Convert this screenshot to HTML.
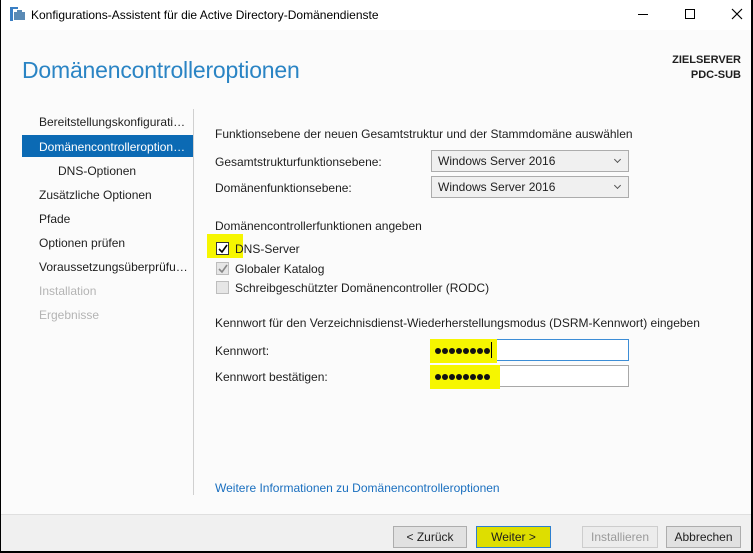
<!DOCTYPE html>
<html><head><meta charset="utf-8"><style>
*{margin:0;padding:0;box-sizing:border-box}
body{width:753px;height:553px;overflow:hidden;font-family:"Liberation Sans",sans-serif;font-size:12px;color:#1e1e1e;background:#000;position:relative}
.win{position:absolute;left:1px;top:0;width:750px;height:551px;background:#fbfbfb}
.t{position:absolute;white-space:nowrap}
.title{position:absolute;left:0;top:0;width:750px;height:30px;background:#fff}
.nav{position:absolute;left:38px;font-size:12px;color:#1e1e1e}
.dis{color:#b4b4b4}
.sel{position:absolute;left:21px;top:135px;width:171px;height:22px;background:#0b6ab4}
.combo{position:absolute;left:430px;width:198px;height:22px;border:1px solid #acacac;background:#f0f0f0;padding:3px 6px;font-size:12px}
.combo:after{content:"";position:absolute;right:8px;top:6px;width:4px;height:4px;border-right:1px solid #555;border-bottom:1px solid #555;transform:rotate(45deg)}
.cb{position:absolute;left:215px;width:13px;height:13px;border:1px solid #bdbdbd;background:#e6e6e6}
.inp{position:absolute;left:430px;width:198px;height:22px;background:#fff;border:1px solid #a8a8a8}
.hl{position:absolute;background:#f6f600}
.btn{position:absolute;top:526px;height:22px;border:1px solid #adadad;background:#e1e1e1;text-align:center;line-height:20px;font-size:12px}
.dots{position:absolute;display:flex;gap:1px}
.dots i{display:block;width:6px;height:6px;border-radius:50%;background:#111}
</style></head><body>
<div class="win">
<div class="title">
<svg class="t" style="left:9px;top:7px" width="16" height="14"><rect x="0" y="0" width="3" height="14" fill="#3a7fc4"/><rect x="3" y="0" width="5" height="2" fill="#3a7fc4"/><rect x="4" y="5" width="11" height="8" fill="#5a8ab5"/><rect x="7" y="3" width="5" height="2" fill="#5a8ab5"/></svg>
<div class="t" style="left:30px;top:8px;font-size:12px;color:#000">Konfigurations-Assistent für die Active Directory-Domänendienste</div>
<div class="t" style="left:637px;top:14px;width:10px;height:1px;background:#000"></div>
<div class="t" style="left:684px;top:9px;width:10px;height:10px;border:1px solid #000"></div>
<svg class="t" style="left:730px;top:8px" width="12" height="12"><path d="M1 1L11 11M11 1L1 11" stroke="#000" stroke-width="1.2"/></svg>
</div>
<div class="t" style="left:21px;top:57px;font-size:23px;color:#2a84c4;letter-spacing:-0.2px">Domänencontrolleroptionen</div>
<div class="t" style="right:10px;top:53px;font-size:11px;font-weight:bold;text-align:right;line-height:15px">ZIELSERVER<br>PDC-SUB</div>
<div class="sel"></div>
<div class="t nav" style="top:115px">Bereitstellungskonfigurati…</div>
<div class="t nav" style="top:140px;color:#fff">Domänencontrolleroption…</div>
<div class="t nav" style="top:164px;left:57px">DNS-Optionen</div>
<div class="t nav" style="top:188px">Zusätzliche Optionen</div>
<div class="t nav" style="top:212px">Pfade</div>
<div class="t nav" style="top:236px">Optionen prüfen</div>
<div class="t nav" style="top:260px">Voraussetzungsüberprüfu…</div>
<div class="t nav dis" style="top:284px">Installation</div>
<div class="t nav dis" style="top:308px">Ergebnisse</div>
<div class="t" style="left:192px;top:109px;width:1px;height:386px;background:#d0d0d0"></div>
<div class="t" style="left:214px;top:127px">Funktionsebene der neuen Gesamtstruktur und der Stammdomäne auswählen</div>
<div class="t" style="left:214px;top:155px">Gesamtstrukturfunktionsebene:</div>
<div class="combo" style="top:150px">Windows Server 2016</div>
<div class="t" style="left:214px;top:181px">Domänenfunktionsebene:</div>
<div class="combo" style="top:176px">Windows Server 2016</div>
<div class="t" style="left:214px;top:219px">Domänencontrollerfunktionen angeben</div>
<div class="hl" style="left:206px;top:234px;width:36px;height:24px"></div>
<div class="cb" style="top:242px;background:#fff;border-color:#333"></div>
<svg class="t" style="left:216px;top:243px" width="12" height="12"><path d="M2 6L5 9L10 2" stroke="#000" stroke-width="1.6" fill="none"/></svg>
<div class="t" style="left:234px;top:242px">DNS-Server</div>
<div class="cb" style="top:262px"></div>
<svg class="t" style="left:216px;top:263px" width="12" height="12"><path d="M2 6L5 9L10 2" stroke="#888" stroke-width="1.6" fill="none"/></svg>
<div class="t" style="left:234px;top:262px">Globaler Katalog</div>
<div class="cb" style="top:281px"></div>
<div class="t" style="left:234px;top:281px">Schreibgeschützter Domänencontroller (RODC)</div>
<div class="t" style="left:214px;top:316px">Kennwort für den Verzeichnisdienst-Wiederherstellungsmodus (DSRM-Kennwort) eingeben</div>
<div class="t" style="left:214px;top:344px">Kennwort:</div>
<div class="inp" style="top:339px;border-color:#3c8dd6"></div>
<div class="hl" style="left:429px;top:339px;width:67px;height:24px"></div>
<div class="dots" style="left:434px;top:348px"><i></i><i></i><i></i><i></i><i></i><i></i><i></i><i></i></div>
<div class="t" style="left:490px;top:342px;width:1px;height:16px;background:#000"></div>
<div class="t" style="left:214px;top:370px">Kennwort bestätigen:</div>
<div class="inp" style="top:365px"></div>
<div class="hl" style="left:429px;top:365px;width:70px;height:24px"></div>
<div class="dots" style="left:434px;top:374px"><i></i><i></i><i></i><i></i><i></i><i></i><i></i><i></i></div>
<div class="t" style="left:214px;top:481px;color:#1a6fbf">Weitere Informationen zu Domänencontrolleroptionen</div>
<div class="t" style="left:0;top:514px;width:750px;height:37px;background:#f0f0f0;border-top:1px solid #dfdfdf"></div>
<div class="btn" style="left:392px;width:74px">&lt; Zurück</div>
<div class="btn" style="left:475px;width:75px;background:#dede00;border-color:#2d7fd0">Weiter &gt;</div>
<div class="btn" style="left:581px;width:76px;color:#9a9a9a;background:#ececec;border-color:#cdcdcd">Installieren</div>
<div class="btn" style="left:665px;width:75px">Abbrechen</div>
</div>
</body></html>
